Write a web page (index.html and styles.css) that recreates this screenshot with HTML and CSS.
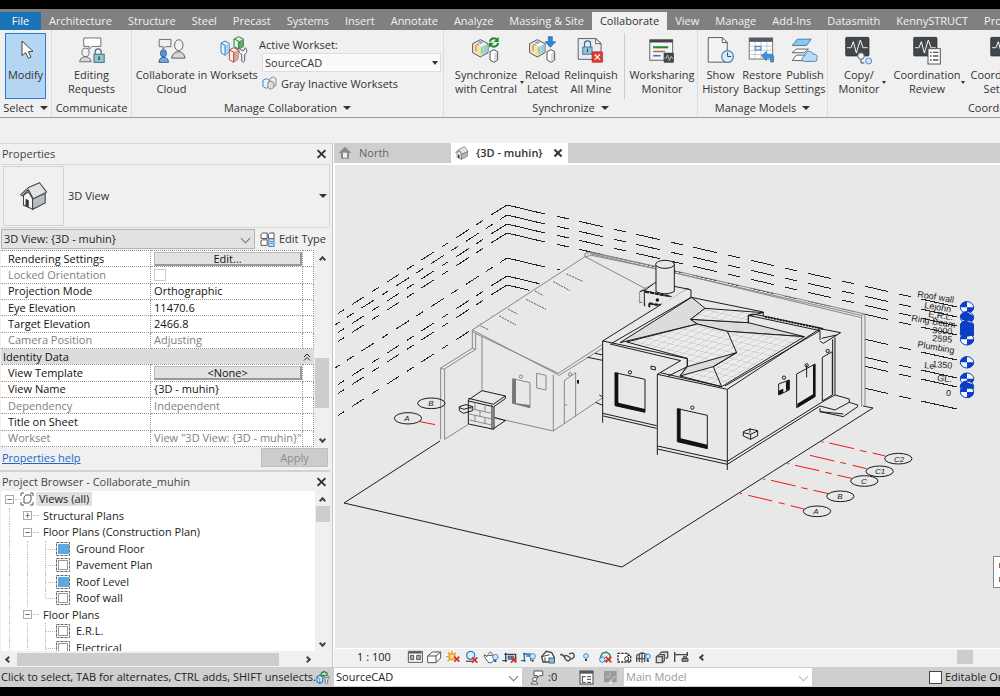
FILE: index.html
```html
<!DOCTYPE html>
<html lang="en">
<head>
<meta charset="utf-8">
<title>Collaborate_muhin</title>
<link rel="stylesheet" href="styles.css">
</head>
<body>
<svg class="defs" aria-hidden="true">
  <defs>
    <symbol id="i-model" viewBox="0 0 84 90">
      <path d="M2 26 25 14 48 26V53L25 66 2 53Z" fill="#f5e9c8" stroke="#555" stroke-width="3"/>
      <path d="M5 28 25 37V62L5 51Z" fill="#f3e3a8"/>
      <path d="M25 37 46 28V52L25 62Z" fill="#bfe3b5"/><path d="M36 32 46 28V52L36 57Z" fill="#9cc9f0"/>
      <path d="M8 26 25 18 42 26 25 34Z" fill="#fff"/><path d="M15 23 25 18 35 23 25 28Z" fill="#7db4e6"/><path d="M12 27 22 31M12 30V48" stroke="#e0603a" stroke-width="3"/><path d="M30 37V55" stroke="#6fbe79" stroke-width="3"/>
      <path d="M54 50 66 44 77 50V75L66 82 54 75Z" fill="#fff" stroke="#555" stroke-width="3"/><path d="M66 57 75 52V74L66 79Z" fill="#d4d8dd"/>
    </symbol>
    <symbol id="i-pulse" viewBox="0 0 84 90">
      <rect x="2" y="7" width="70" height="56" rx="3" fill="#41464b" stroke="#22262a" stroke-width="2"/>
      <path d="M6 38H18L25 20 34 54 46 15 54 38H68" fill="none" stroke="#fff" stroke-width="3"/>
      <path d="M6 38H68M38 10V60" stroke="#8b9096" stroke-width="1"/>
    </symbol>
    <symbol id="i-house" viewBox="0 0 80 84">
      <path d="M10 40V68L36 80V50L24 30Z" fill="#f4f5f7" stroke="#444" stroke-width="3"/>
      <path d="M36 50 72 34V62L36 80Z" fill="#b6bcc6" stroke="#444" stroke-width="3"/>
      <path d="M2 38 24 18 56 4 76 31 38 50 24 24 6 42Z" fill="#dfe3e8" stroke="#444" stroke-width="3" stroke-linejoin="round"/>
      <path d="M16 50 25 54V74L16 70Z" fill="#333"/>
    </symbol>
    <symbol id="i-sheet" viewBox="0 0 14 14">
      <rect x=".5" y=".5" width="13" height="13" fill="none" stroke="#666" stroke-dasharray="3 1"/>
      <rect x="2.500" y="2.500" width="9" height="9" fill="#fff" stroke="#999"/>
    </symbol>
    <symbol id="i-sheet-on" viewBox="0 0 14 14">
      <rect x=".5" y=".5" width="13" height="13" fill="#fff" stroke="#666" stroke-dasharray="3 1"/>
      <rect x="2" y="2" width="11" height="10" fill="#5ca9e2"/>
    </symbol>
    <symbol id="i-worksets" viewBox="0 0 84 90">
      <g stroke-width="3" stroke-linejoin="round">
        <path d="M3 25 15 18 28 25V50L15 61 3 53Z" fill="#e6f2fc" stroke="#2f80c8"/><path d="M15 31 28 25V50L15 61Z" fill="#aed2f2"/><path d="M3 25 15 31V60" fill="none" stroke="#2f80c8"/>
        <path d="M42 12 56 5 70 12V35L56 42 42 35Z" fill="#dff2df" stroke="#2e7d3e"/><path d="M56 19 69 13V34L56 41Z" fill="#5fa96a"/><path d="M44 12 56 19V40" fill="none" stroke="#2e7d3e"/>
        <path d="M28 45 41 38 54 45V72L41 82 28 74Z" fill="#fdecea" stroke="#b1483f"/><path d="M41 51 54 45V72L41 82Z" fill="#d9a49d"/><path d="M28 45 41 51V81" fill="none" stroke="#b1483f"/>
        <path d="M58 38 64 46 72 46 76 38C84 46 80 56 74 58V78Q70 86 65 78V58C56 54 55 44 58 38Z" fill="#eef0f3" stroke="#555f6b"/>
      </g>
    </symbol>
    <symbol id="i-worksets-small" viewBox="0 0 48 48">
      <path d="M3 22 13 16 23 22V38L13 45 3 38Z" fill="#d6eafb" stroke="#2f80c8" stroke-width="4"/><path d="M4 23 13 28V44" fill="none" stroke="#2f80c8" stroke-width="3"/>
      <path d="M18 9 28 3 38 9V17H18Z" fill="#b9e0bd" stroke="#2e7d3e" stroke-width="4"/>
      <path d="M28 20 33 26 38 26 43 20Q48 28 40 32V42Q36 48 32 42V32Q24 28 28 20Z" fill="#eef0f3" stroke="#555f6b" stroke-width="3"/>
    </symbol>
    <pattern id="tiles" width="1" height="1" patternUnits="userSpaceOnUse" patternTransform="matrix(21 5 22 -13 0 0)">
      <rect width="1" height="1" fill="#ececec"/><path d="M0 0H1M0 0V1" stroke="#aaa" stroke-width=".12"/>
    </pattern>
    <g id="level">
      <path d="M507 205 545 214M921 299 957 307"/>
      <path d="M557 216.300 921 299" stroke-dasharray="12 11 24 11.500"/>
    </g>
    <g id="level-a">
      <path d="M507 205 491 215"/><path d="M483 220.500 338 313.500" stroke-dasharray="8 9 15 9.300"/>
    </g>
    <g id="level-b">
      <path d="M507 205 500 209.500"/><path d="M493 214 335 315" stroke-dasharray="8 9 15 9.300"/>
    </g>
    <g id="tag">
      <ellipse rx="20" ry="17" fill="#f4f7ff" stroke="#0a3fb5" stroke-width="3"/>
      <path d="M0-18V0H-21A21 18 0 0 1 0-18ZM0 0H21A21 18 0 0 1 0 18Z" fill="#0a3fc5"/>
    </g>
  </defs>
</svg>

<nav class="tabs" aria-label="Ribbon tabs">
  <button class="tab file">File</button>
  <button class="tab">Architecture</button><button class="tab">Structure</button><button class="tab">Steel</button><button class="tab">Precast</button><button class="tab">Systems</button><button class="tab">Insert</button><button class="tab">Annotate</button><button class="tab">Analyze</button><button class="tab">Massing &amp; Site</button><button class="tab active">Collaborate</button><button class="tab">View</button><button class="tab">Manage</button><button class="tab">Add-Ins</button><button class="tab">Datasmith</button><button class="tab">KennySTRUCT</button><button class="tab">Prov</button>
</nav>

<div class="ribbon">
  <section class="group g-select">
    <div class="tools">
      <button class="tool modify">
        <svg viewBox="0 0 84 90"><path d="M30 18V62L41 53 49 70 57 66 49 50 63 49Z" fill="#fff" stroke="#444" stroke-width="3"/></svg>
        <span>Modify</span></button>
    </div>
    <button class="title">Select <i class="caret"></i></button>
  </section>
  <section class="group g-comm">
    <div class="tools">
      <button class="tool">
        <svg viewBox="228 104 93 90"><path d="M247 109H304V137H275L265 147V137H247Z" fill="#fff" stroke="#666" stroke-width="3"/><ellipse cx="253" cy="157" rx="12" ry="14" fill="#f1f2f4" stroke="#666" stroke-width="3"/><path d="M233 188Q234 175 248 172H258Q270 176 272 188Z" fill="#d8dbe0" stroke="#666" stroke-width="3"/><path d="M285 162V155A10 10 0 0 1 305 155V165" fill="none" stroke="#4a6a74" stroke-width="4"/><rect x="281" y="163" width="34" height="27" fill="#8cc6cf" stroke="#3d6873" stroke-width="3"/><path d="M298 171V182" stroke="#234" stroke-width="4"/></svg>
        <span>Editing<br>Requests</span></button>
    </div>
    <div class="title">Communicate</div>
  </section>
  <section class="group g-manage">
    <div class="tools">
      <button class="tool w74">
        <svg viewBox="465 104 93 90"><path d="M469 114H508V138H490L482 147V138H469Z" fill="#eceef0" stroke="#666" stroke-width="3"/><ellipse cx="534" cy="133" rx="14" ry="18" fill="#f4f5f6" stroke="#555" stroke-width="3"/><path d="M510 176Q512 160 528 155H540Q553 160 555 176Z" fill="#d4d7db" stroke="#555" stroke-width="3"/><ellipse cx="483" cy="160" rx="10" ry="12" fill="#5c93ce" stroke="#2b5c99" stroke-width="3"/><path d="M468 190Q468 177 478 174H490Q500 178 500 190Z" fill="#76a8dc" stroke="#2b5c99" stroke-width="3"/></svg>
        <span>Collaborate in<br>Cloud</span></button>
      <button class="tool w50"><svg><use href="#i-worksets"/></svg><span>Worksets</span></button>
      <div class="workset">
        <label for="active-workset">Active Workset:</label>
        <div class="combo"><select id="active-workset"><option>SourceCAD</option></select></div>
        <button class="inline"><svg viewBox="782 232 46 42"><path d="M785 243 795 238 804 243V261L795 268 785 262Z" fill="#e6f2fc" stroke="#3a86cc" stroke-width="3"/><path d="M806 238 815 233 825 238V260L806 260Z" fill="#eee" stroke="#888" stroke-width="3"/><path d="M800 250 809 246 818 250V265L809 271 800 266Z" fill="#ddd" stroke="#888" stroke-width="3"/></svg>Gray Inactive Worksets</button>
      </div>
    </div>
    <button class="title">Manage Collaboration <i class="caret"></i></button>
  </section>
  <section class="group g-sync">
    <div class="tools">
      <button class="tool w72 drop">
        <svg viewBox="0 0 84 90"><use href="#i-model" width="84" height="90"/><path d="M54 20A12 11 0 0 1 75 14M78 24A12 11 0 0 1 57 31" fill="none" stroke="#1f8a2a" stroke-width="6"/><path d="M80 5V21H65ZM51 38V23H66Z" fill="#1f8a2a"/></svg>
        <span>Synchronize<br>with Central</span><i class="caret small"></i></button>
      <button class="tool w40">
        <svg viewBox="0 0 84 90"><use href="#i-model" width="84" height="90"/><path d="M58 5H70V20H80L64 37 48 20H58Z" fill="#2e86de" stroke="#1c5fa8" stroke-width="2"/></svg>
        <span>Reload<br>Latest</span></button>
      <button class="tool w56">
        <svg viewBox="738 104 93 90"><path d="M742 111H800L818 128V180H742Z" fill="#e9edf3" stroke="#555" stroke-width="3"/><path d="M800 111V128H818Z" fill="#fff" stroke="#555" stroke-width="3"/><path d="M763 138V128A10 9 0 0 1 783 128V140" fill="none" stroke="#3f6d8c" stroke-width="4"/><rect x="757" y="139" width="31" height="24" fill="#93c4d8" stroke="#3f6d8c" stroke-width="3"/><path d="M773 145V156" stroke="#234" stroke-width="3"/><rect x="788" y="155" width="35" height="35" rx="3" fill="#df3a34" stroke="#a9201c" stroke-width="2"/><path d="M797 164 814 181M814 164 797 181" stroke="#fff" stroke-width="4"/></svg>
        <span>Relinquish<br>All Mine</span></button>
      <div class="rule"></div>
      <button class="tool w66">
        <svg viewBox="0 0 93 90"><rect x="6" y="11" width="76" height="68" fill="#f4f5f6" stroke="#555" stroke-width="3"/><rect x="6" y="11" width="76" height="9" fill="#444"/><path d="M17 36H67" stroke="#1f8a2a" stroke-width="7"/><path d="M17 50H57" stroke="#d1622f" stroke-width="5"/><path d="M17 64H42" stroke="#2e78c8" stroke-width="5"/><rect x="52" y="54" width="34" height="33" rx="3" fill="#41464b"/><path d="M55 72H61L65 62 71 80 77 66 80 72H84" fill="none" stroke="#fff" stroke-width="2"/></svg>
        <span>Worksharing<br>Monitor</span></button>
    </div>
    <button class="title">Synchronize <i class="caret"></i></button>
  </section>
  <section class="group g-models">
    <div class="tools">
      <button class="tool w40">
        <svg viewBox="135 104 90 90"><path d="M139 109H184L200 125V188H139Z" fill="#f2f3f5" stroke="#555" stroke-width="3"/><path d="M184 109V125H200Z" fill="#fff" stroke="#555" stroke-width="3"/><circle cx="201" cy="170" r="19" fill="#d8ecfa" stroke="#4c83b5" stroke-width="4"/><path d="M201 157V170H213" fill="none" stroke="#345" stroke-width="3"/></svg>
        <span>Show<br>History</span></button>
      <button class="tool w42">
        <svg viewBox="258 104 93 90"><rect x="262" y="109" width="78" height="70" fill="#fff" stroke="#666" stroke-width="3"/><rect x="262" y="109" width="78" height="13" fill="#555b62"/><path d="M262 136H340M262 150H340M262 164H340M281 122V179M301 122V179M321 122V179" stroke="#aab" stroke-width="2"/><rect x="282" y="137" width="19" height="12" fill="#d6e9fa" stroke="#2e78c8" stroke-width="3"/><path d="M302 168 319 154V163H335Q343 163 343 172V189H333V175H319V184Z" fill="#3f92e0" stroke="#1c64ae" stroke-width="2"/></svg>
        <span>Restore<br>Backup</span></button>
      <button class="tool w44">
        <svg viewBox="384 104 93 90"><path d="M388 184 402 166H440L426 184ZM388 158 402 146H442L428 158Z" fill="#fff" stroke="#555" stroke-width="3"/><path d="M388 134 405 113H451L436 134Z" fill="#8fc7ec" stroke="#3878ac" stroke-width="3"/><path d="M431 187C419 188 416 172 429 169 431 151 452 148 457 163 468 161 474 170 470 177 472 184 468 187 462 187Z" fill="#b9dcf5" stroke="#3f82bd" stroke-width="3"/></svg>
        <span>Publish<br>Settings</span></button>
    </div>
    <button class="title">Manage Models <i class="caret"></i></button>
  </section>
  <section class="group g-coord">
    <div class="tools">
      <button class="tool w50 drop">
        <svg viewBox="0 0 84 90"><use href="#i-pulse" width="84" height="90"/><circle cx="48" cy="63" r="10" fill="#f1f1f1" stroke="#666" stroke-width="3"/><path d="M48 73V84H58" fill="none" stroke="#444" stroke-width="3"/><circle cx="71" cy="78" r="9" fill="#cfe7fa" stroke="#4b93cf" stroke-width="3"/></svg>
        <span>Copy/<br>Monitor</span><i class="caret small"></i></button>
      <button class="tool w72 drop">
        <svg viewBox="0 0 84 90"><use href="#i-pulse" width="84" height="90"/><rect x="45" y="41" width="37" height="46" fill="#fff" stroke="#555" stroke-width="3"/><path d="M51 52H56M51 63H56M51 75H56M60 52H76M60 63H76M60 75H76" stroke="#555" stroke-width="4"/></svg>
        <span>Coordination<br>Review</span><i class="caret small"></i></button>
      <button class="tool w66"><svg><use href="#i-pulse"/></svg><span>Coordination<br>Settings</span></button>
    </div>
    <div class="title">Coordinate</div>
  </section>
</div>
<div class="options"></div>

<main class="work">
  <aside class="side">
    <header class="bar"><span>Properties</span><button class="close" aria-label="Close properties"></button></header>
    <div class="type">
      <div class="thumb"><svg><use href="#i-house"/></svg></div>
      <span>3D View</span><i class="caret"></i>
    </div>
    <div class="filter">
      <div class="combo chevron"><select aria-label="Selection filter"><option>3D View: {3D - muhin}</option></select></div>
      <button class="inline"><svg viewBox="0 0 46 46"><path d="M3 7 8 3H22V20H3ZM26 7 30 3H43V20H26ZM3 27 8 24H22V41H3Z" fill="#fff" stroke="#555" stroke-width="3"/><rect x="27" y="21" width="16" height="23" fill="#dcecf8" stroke="#2e78c8" stroke-width="3"/><path d="M31 29H40M31 35H40" stroke="#2e78c8" stroke-width="3"/></svg>Edit Type</button>
    </div>
    <div class="scroller props">
      <table>
        <tbody>
        <tr><th>Rendering Settings</th><td><button class="cell">Edit...</button></td><td></td></tr>
        <tr class="dim"><th><label for="locked">Locked Orientation</label></th><td><input type="checkbox" id="locked" disabled></td><td></td></tr>
        <tr><th>Projection Mode</th><td>Orthographic</td><td></td></tr>
        <tr><th>Eye Elevation</th><td>11470.6</td><td></td></tr>
        <tr><th>Target Elevation</th><td>2466.8</td><td></td></tr>
        <tr class="dim"><th>Camera Position</th><td>Adjusting</td><td></td></tr>
        <tr class="head"><th colspan="2">Identity Data</th><td><svg viewBox="0 0 8 8"><path d="M1 4 4 1 7 4M1 7.500 4 4.500 7 7.500"/></svg></td></tr>
        <tr><th>View Template</th><td><button class="cell">&lt;None&gt;</button></td><td></td></tr>
        <tr><th>View Name</th><td>{3D - muhin}</td><td></td></tr>
        <tr class="dim"><th>Dependency</th><td>Independent</td><td></td></tr>
        <tr><th>Title on Sheet</th><td></td><td></td></tr>
        <tr class="dim"><th>Workset</th><td>View "3D View: {3D - muhin}"</td><td></td></tr>
        </tbody>
      </table>
      <div class="vscroll"><i class="arrow up"></i><b></b><i class="arrow down"></i></div>
    </div>
    <div class="help"><a href="#help">Properties help</a><button class="apply" disabled>Apply</button></div>

    <header class="bar browser"><span>Project Browser - Collaborate_muhin</span><button class="close" aria-label="Close project browser"></button></header>
    <div class="scroller tree-box">
      <ul class="tree">
        <li><i class="g box root">−</i><svg class="views" viewBox="0 0 14 14"><path d="M1 4V1H4M10 1H13V4M13 10V13H10M4 13H1V10" fill="none" stroke="#555"/><path d="M4 5 6 3H11V8L9 11H4Z" fill="#fff" stroke="#555"/></svg><span class="hot">Views (all)</span></li>
        <li><i class="g v"></i><i class="g box">+</i><span class="branch">Structural Plans</span></li>
        <li><i class="g v"></i><i class="g box">−</i><span class="branch">Floor Plans (Construction Plan)</span></li>
        <li><i class="g v"></i><i class="g v"></i><i class="g v h"></i><svg><use href="#i-sheet-on"/></svg><span>Ground Floor</span></li>
        <li><i class="g v"></i><i class="g v"></i><i class="g v h"></i><svg><use href="#i-sheet"/></svg><span>Pavement Plan</span></li>
        <li><i class="g v"></i><i class="g v"></i><i class="g v h"></i><svg><use href="#i-sheet-on"/></svg><span>Roof Level</span></li>
        <li><i class="g v"></i><i class="g v"></i><i class="g v h end"></i><svg><use href="#i-sheet"/></svg><span>Roof wall</span></li>
        <li><i class="g v"></i><i class="g box">−</i><span class="branch">Floor Plans</span></li>
        <li><i class="g v"></i><i class="g v"></i><i class="g v h"></i><svg><use href="#i-sheet"/></svg><span>E.R.L.</span></li>
        <li><i class="g v"></i><i class="g v"></i><i class="g v h"></i><svg><use href="#i-sheet"/></svg><span>Electrical</span></li>
      </ul>
      <div class="vscroll top"><i class="arrow up"></i><b></b><i class="arrow down"></i></div>
    </div>
    <div class="hscroll"><i class="arrow left"></i><b></b><i class="arrow right"></i></div>
  </aside>

  <section class="view">
    <div class="docs">
      <button class="doc"><svg viewBox="0 0 42 42"><path d="M21 2 40 21H33V38H9V21H2Z" fill="#8a8a8a"/><rect x="15" y="20" width="12" height="15" fill="#eee"/></svg>North</button>
      <div class="doc on"><svg><use href="#i-house"/></svg><span>{3D - muhin}</span><button class="close" aria-label="Close view"></button></div>
    </div>
    <div class="canvas">
      <svg class="scene" viewBox="335 165 665 484" preserveAspectRatio="xMinYMin slice" role="img" aria-label="Axonometric view of the house">
        <g class="lv">
          <use href="#level"/><use href="#level" y="10"/><use href="#level" y="19"/><use href="#level" y="28"/><use href="#level" y="53"/><use href="#level" y="71"/><use href="#level" y="80"/><use href="#level" y="102"/>
          <use href="#level-a"/><use href="#level-b" y="10"/><use href="#level-a" y="19"/><use href="#level-a" y="28"/><use href="#level-b" y="53"/><use href="#level-a" y="71"/><use href="#level-a" y="80"/><use href="#level-a" y="102"/>
        </g>
        <path class="bg" d="M441 369 472 348 472 329 585 253 864 314V407L730 470 553 431 444 439Z"/>
        <path class="ln" d="M440 441 344 503 622 567 873 408 863 406"/>

        <!-- rear wing -->
        <g class="ln grey" transform="translate(330 140) scale(.3333)">
          <path d="M427 570 765 350 765 340 780 338 980 380M765 350 785 346 980 387M765 350 945 445 975 430M427 570 688 706 822 622M430 577 685 700 820 612M427 570V625M437 580V628M456 590V752M332 684 427 625 437 628 342 688ZM332 684V898M344 688V898L415 853M670 705V873L820 772M670 873 492 833"/>
          <path d="M548 716 600 728V803L548 790ZM620 700 648 706V750L620 744ZM703 850V722L737 698V830M703 795H712M929 490V455L945 445V500"/>
        </g>
        <g class="ln hatch" transform="translate(330 140) scale(.3333)">
          <path d="M710 402 760 425M670 425 720 452M588 478 648 508M508 528 558 555M535 508 562 522M615 453 640 467M452 558 477 570"/>
        </g>
        <g transform="translate(330 140) scale(.3333)">
          <path d="M548 716 558 718V790L600 795V804L546 790Z" fill="#777"/>
          <path class="bg ln" d="M415 780 456 752 526 768V776L492 800V868L415 852Z"/>
          <path class="ln" d="M415 775 490 793 526 768M415 783 490 800M486 797V868M388 800 408 794 428 800V812L400 820 388 812ZM388 803 402 808 428 800M495 833 526 842 492 865"/>
          <path class="ln grey" d="M418 805 485 820M418 822 485 837M418 840 485 855M435 790V808M465 797V815M450 812V830M435 826V845M465 832V850"/>
          <ellipse class="ln" cx="304" cy="790" rx="41" ry="16"/><ellipse class="ln" cx="234" cy="835" rx="41" ry="17"/>
          <path class="red" d="M270 845 315 854"/><circle cx="573" cy="710" r="5" class="ln grey"/><circle cx="720" cy="703" r="5" class="ln grey"/>
          <path class="ln thick" d="M744 720V731"/><path class="ln" d="M773 652 822 662M795 640 832 648 832 658M797 787 820 797M808 765 820 772"/>
        </g>

        <!-- back wall and main block -->
        <g class="ln grey" transform="translate(590 240) scale(.3333)">
          <path d="M0 35 825 222V500M0 41 815 226V500M815 226 825 222M252 98 815 233"/>
        </g>
        <g class="ln" transform="translate(590 240) scale(.3333)">
          <path class="bg plain" d="M38 303 290 148 303 150V170L520 218 700 266 752 278 735 292V465L412 672 202 625V565L38 530Z"/>
          <path class="shade" d="M90 308 305 172 345 205 302 238 322 252Z"/>
          <path class="shade" d="M302 238 475 248 643 290 412 274 322 252Z"/>
          <path class="tile" d="M345 205 520 218 475 228V248L302 238Z"/>
          <path class="tile" d="M110 306 322 252 412 274 643 290 395 440 270 408 292 378V355Z"/>
          <path class="shade" d="M440 338 292 380 270 408 370 380Z"/>
          <path d="M440 338 412 274M440 338 370 380 395 440"/>
          <path d="M38 303V548M38 303 275 155 290 146 303 150V172M65 310 303 172M38 303 292 356V380L235 408M60 312 272 362 202 403M202 403V645M202 403 412 448 690 266M210 398 395 440 M405 438 690 272M412 448V690"/>
          <path d="M303 172 520 216V230M475 250V226L690 272V300M475 226 490 222 700 266M690 266 752 278 700 310 690 303M695 295 740 285M735 292V465M728 298V465"/>
          <path class="thick dark" d="M525 230 700 267" stroke-dasharray="2 1"/>
          <path d="M38 520 200 557M40 528 200 565M202 618 412 664 690 490M202 627 412 673 690 498M690 490 735 465 778 477V487L735 510 690 498M690 505V515L760 530 803 500V495L778 487M690 515 760 522"/>
          <!-- windows and doors -->
          <path d="M75 398 165 418V517L75 497ZM262 506 352 526V626L262 605ZM620 402 675 372V470L620 503ZM697 352 727 335V465L697 483ZM566 432 598 420V450L566 465Z"/>
          <path class="fill" d="M75 398H85V488L165 507V517L75 497ZM262 506H272V595L352 614V626L262 605ZM669 376 676 372V470L622 503V491L669 463ZM566 452 580 446V458L566 465ZM588 425 598 420V448L588 453Z"/>
          <path d="M183 378 196 381V390L183 387ZM460 575 480 567 503 572V587L482 598 460 588ZM460 578 482 583 503 573M482 583V598M480 565V578M650 375V412"/>
          <circle cx="120" cy="397" r="5"/><circle cx="307" cy="503" r="5"/><circle cx="582" cy="413" r="5"/><circle cx="650" cy="376" r="5"/><circle cx="713" cy="333" r="5"/>
          <!-- water tank -->
          <path class="bg plain" d="M163 150 195 128 290 146 215 195 163 190Z"/>
          <path d="M163 152 195 128 298 148M163 152 245 170M150 155 163 150M163 150V198M178 190 200 196 215 192"/>
          <path class="thick dark" d="M165 155 240 169M178 190V205M178 190 208 195" stroke-dasharray="4 1"/>
          <path class="bg" d="M198 72V155Q225 168 253 155V72"/><ellipse class="bg" cx="225" cy="73" rx="28" ry="12"/>
          <circle cx="202" cy="180" r="5" class="fill"/><path d="M150 187H157" stroke="#1f9a2f"/>
        </g>

        <!-- grid lines -->
        <g transform="translate(700 420) scale(.3333)">
          <path class="red" d="M388 69 462 86M480 91 500 96M518 99 556 108M330 106 403 123M421 127 438 131M458 136 500 146M285 136 358 152M376 157 395 161M413 166 455 175M213 181 287 198M304 203 323 207M341 211 385 221M145 226 217 243M236 248 254 252M272 257 312 267M365 66H371M262 131H268M190 178H196M120 221H126"/>
          <g class="ln"><ellipse cx="595" cy="116" rx="41" ry="16"/><ellipse cx="539" cy="154" rx="41" ry="16"/><ellipse cx="493" cy="183" rx="41" ry="16"/><ellipse cx="421" cy="229" rx="41" ry="16"/><ellipse cx="351" cy="274" rx="41" ry="16"/></g>
        </g>
        <g class="names">
          <text x="899" y="462">C2</text><text x="880" y="474">C1</text><text x="864" y="484">C</text><text x="840" y="499">B</text><text x="816" y="514">A</text><text x="431" y="406">B</text><text x="407" y="421">A</text>
        </g>
        <g transform="translate(860 270) scale(.3333)">
          <use href="#tag" x="321" y="112"/><use href="#tag" x="321" y="142"/><use href="#tag" x="321" y="168"/><use href="#tag" x="321" y="190"/><use href="#tag" x="321" y="208"/><use href="#tag" x="321" y="277"/><use href="#tag" x="321" y="326"/><use href="#tag" x="321" y="350"/><use href="#tag" x="321" y="366"/>
          <path d="M300 138 321 126 341 138 335 150H306ZM300 165 321 153 342 162V196L321 200 300 194ZM302 348 321 336 341 344 336 356H306Z" fill="#0a3fc5"/>
        </g>
        <g class="levels">
          <text transform="translate(917 297) rotate(9)">Roof wall</text>
          <text transform="translate(924 308) rotate(9)">Lejohn</text>
          <text transform="translate(928 317) rotate(7)">E.R.L.</text>
          <text transform="translate(911 321) rotate(9)">Ring Beam</text>
          <text transform="translate(932 333) rotate(5)">3000</text>
          <text transform="translate(932 341) rotate(5)">2595</text>
          <text transform="translate(917 347) rotate(10)">Plumbing</text>
          <text transform="translate(924 368) rotate(7)">Le</text>
          <text transform="translate(932 367) rotate(5)">1350</text>
          <text transform="translate(937 381) rotate(5)">GL.</text>
          <text transform="translate(946 396)">0</text>
        </g>
      </svg>
      <div class="tip"></div>
    </div>
    <div class="viewbar">
      <button class="scale">1 : 100</button>
      <button class="vb" aria-label="Detail level"><svg viewBox="227 28 54 45"><path d="M234 32H276V65H234Z" fill="#fff" stroke="#555" stroke-width="3"/><path d="M236 36H274" stroke="#555" stroke-width="5"/><path d="M240 44H250V57H240ZM259 44H270V57H259Z" stroke="#555" stroke-width="3" fill="#aaa"/></svg></button>
      <button class="vb" aria-label="Visual style"><svg viewBox="286 28 54 45"><path d="M294 46 308 34H333V52L319 66H294ZM294 46H319L333 34M319 46V66" fill="#fff" stroke="#555" stroke-width="3"/></svg></button>
      <button class="vb" aria-label="Sun path off"><svg viewBox="339 28 54 45"><circle cx="363" cy="48" r="9" fill="#fbd77c" stroke="#e09a20" stroke-width="4"/><path d="M363 30V36M346 48H352M351 35 356 40M375 36 371 40M350 62 356 56" stroke="#e09a20" stroke-width="4"/><path d="M370 48 385 63M385 48 370 63" stroke="#d2322b" stroke-width="5"/></svg></button>
      <button class="vb" aria-label="Shadows off"><svg viewBox="403 28 54 45"><circle cx="426" cy="44" r="12" fill="#dcebf8" stroke="#3a7fbd" stroke-width="4"/><path d="M412 62H432" stroke="#555" stroke-width="4"/><path d="M430 50 446 66M446 50 430 66" stroke="#d2322b" stroke-width="5"/></svg></button>
      <button class="vb" aria-label="Rendering dialog"><svg viewBox="455 28 54 45"><path d="M470 44H490V60L483 66H475L462 48V42L470 48ZM474 40 480 34 487 40" fill="#fff" stroke="#555" stroke-width="3"/><circle cx="495" cy="49" r="8" fill="#d4eafa" stroke="#3a8fd6" stroke-width="3"/><path d="M492 61H498" stroke="#345" stroke-width="6"/></svg></button>
      <button class="vb" aria-label="Crop view"><svg viewBox="514 28 54 45"><path d="M518 60H532M528 36V64M524 41H558V62" fill="none" stroke="#345" stroke-width="4"/><path d="M535 46H552V56H535Z" fill="#4c93d4" stroke="#246" stroke-width="2"/><path d="M544 50 560 66M560 50 544 66" stroke="#d2322b" stroke-width="5"/></svg></button>
      <button class="vb" aria-label="Show crop region"><svg viewBox="573 28 54 45"><path d="M576 60H590M586 36V64M582 40H605M592 46H605V60" fill="none" stroke="#2f6da8" stroke-width="4"/><circle cx="611" cy="47" r="8" fill="#d4eafa" stroke="#3a8fd6" stroke-width="3"/><path d="M608 60H614" stroke="#345" stroke-width="6"/></svg></button>
      <button class="vb" aria-label="Lock 3D view"><svg viewBox="628 28 54 45"><path d="M636 48 650 32 666 36 674 50V64H640Z" fill="#fff" stroke="#444" stroke-width="4"/><path d="M646 50V64M636 48 660 42" stroke="#444" stroke-width="3"/><rect x="658" y="52" width="16" height="15" fill="#8cc6cf" stroke="#3d6873" stroke-width="3"/></svg></button>
      <button class="vb" aria-label="Temporary hide"><svg viewBox="685 28 54 45"><path d="M692 44Q696 38 702 46L708 56Q714 64 720 58T714 46 706 54M718 40Q730 34 733 42T724 56" fill="none" stroke="#444" stroke-width="4"/></svg></button>
      <button class="vb" aria-label="Reveal hidden"><svg viewBox="743 28 54 45"><circle cx="770" cy="46" r="7" fill="#d4eafa" stroke="#3a8fd6" stroke-width="3"/><path d="M767 58H773" stroke="#345" stroke-width="6"/></svg></button>
      <button class="vb" aria-label="Worksharing display off"><svg viewBox="801 28 54 45"><path d="M814 50 820 38 832 34 843 42V56L826 62Z" fill="#dff2df" stroke="#2e8b57" stroke-width="4"/><circle cx="820" cy="57" r="8" fill="#dcebf8" stroke="#2f80c8" stroke-width="3"/><path d="M830 48 847 65M847 48 830 65" stroke="#d2322b" stroke-width="5"/></svg></button>
      <button class="vb" aria-label="Temporary view properties"><svg viewBox="859 28 54 45"><path d="M868 38H898V64H868ZM898 44H906V64H890" fill="#fff" stroke="#333" stroke-width="4" stroke-dasharray="7 3"/><circle cx="894" cy="54" r="6" fill="#fff" stroke="#333" stroke-width="3"/></svg></button>
      <button class="vb" aria-label="Analytical model"><svg viewBox="916 28 54 45"><path d="M924 44 940 36 956 42V62M924 44V64M940 38V66M932 42V64M948 42V64M924 54H950" fill="none" stroke="#555" stroke-width="4"/><circle cx="958" cy="47" r="7" fill="#d4eafa" stroke="#3a8fd6" stroke-width="3"/><path d="M955 60H961" stroke="#345" stroke-width="6"/></svg></button>
      <button class="vb" aria-label="Highlight displacement sets"><svg viewBox="974 28 54 45"><path d="M984 48 992 42H1008V60L1002 66H984ZM984 48H1002V66M994 38 1002 34H1018V50L1012 54" fill="#ddd" stroke="#555" stroke-width="4"/></svg></button>
      <button class="vb" aria-label="Reveal constraints"><svg viewBox="1032 28 54 45"><path d="M1040 34V64M1040 42H1078M1078 34V46" stroke="#444" stroke-width="4"/><path d="M1062 62V54H1080V62ZM1066 54V48H1076V54" fill="#999" stroke="#444" stroke-width="3"/></svg></button>
      <i class="arrow left"></i>
      <div class="hthumb"></div>
    </div>
  </section>
</main>

<footer class="status">
  <span class="hint">Click to select, TAB for alternates, CTRL adds, SHIFT unselects.</span>
  <svg class="ws"><use href="#i-worksets-small"/></svg>
  <div class="combo chevron white"><select aria-label="Workset"><option>SourceCAD</option></select></div>
  <svg class="req" viewBox="0 0 42 45"><path d="M12 3H38V17H28L22 24V17H12ZM8 28Q8 22 14 22T20 28 14 34 8 28ZM3 42Q6 34 14 34T24 42Z" fill="#fff" stroke="#555" stroke-width="3"/></svg>
  <span class="count">:0</span>
  <svg class="opt" viewBox="0 0 45 45"><rect x="3" y="3" width="39" height="39" fill="#fff" stroke="#444" stroke-width="3"/><rect x="3" y="3" width="39" height="8" fill="#555"/><path d="M10 18V38M10 20H20M10 37H20M24 20H36M24 28H36M24 37H36" stroke="#444" stroke-width="3"/></svg>
  <svg class="opt" viewBox="0 0 45 45"><rect x="3" y="3" width="38" height="34" fill="#9b9b9b"/><path d="M8 20H20V8M20 34 38 18" stroke="#bbb" stroke-width="4" fill="none"/><path d="M16 40 26 30V42Z" fill="#eee"/></svg>
  <div class="combo chevron white dim"><select aria-label="Design option"><option>Main Model</option></select></div>
  <label class="edit"><input type="checkbox"> Editable Only</label>
</footer>
</body>
</html>
```
FILE: styles.css
```css
* { box-sizing: border-box; }

body {
  margin: 0;
  height: 100vh;
  padding: 9px 0;
  display: flex;
  flex-direction: column;
  overflow: hidden;
  background: #000;
  color: #333;
  font: 11px/14px "Open Sans", "Noto Sans", sans-serif;
}

button, select, input { font: inherit; color: inherit; margin: 0; }
button { background: none; border: 0; padding: 0; white-space: nowrap; }
svg { flex: none; overflow: visible; }
.defs { position: absolute; width: 0; height: 0; }

/* ribbon tabs */
.tabs { flex: none; display: flex; height: 21px; padding-top: 3px; background: #808080; overflow: hidden; }
.tab { flex: none; padding: 0 8px; color: #f2f2f2; }
.tab.file { width: 41px; background: #1c74b8; color: #fff; }
.tab.active { background: #f0f0f0; color: #333; }

/* ribbon */
.ribbon { flex: none; display: flex; height: 88px; background: #f0f0f0; border-bottom: 1px solid #999; overflow: hidden; }
.group { flex: none; display: flex; flex-direction: column; padding-top: 3px; border-right: 1px solid #ddd; }
.tools { display: flex; justify-content: center; height: 66px; }
.title { display: flex; align-items: center; justify-content: center; gap: 6px; height: 18px; }
.g-select { width: 52px; }
.g-comm { width: 80px; }
.g-manage { width: 312px; }
.g-sync { width: 254px; }
.g-models { width: 130px; }
.g-coord { width: 338px; }
.g-manage .tools, .g-models .tools { justify-content: flex-start; padding-left: 2px; }
.g-sync .tools { justify-content: flex-start; padding-left: 6px; }
.g-coord .tools { justify-content: flex-start; padding-left: 6px; gap: 7px; }

.tool { position: relative; display: flex; flex-direction: column; align-items: center; gap: 3px; padding-top: 2px; }
.tool svg { width: 28px; height: 30px; }
.tool.modify { width: 41px; height: 66px; background: #b5d6f2; border: 1px solid #2c7fd0; padding-top: 1px; }
.w40 { width: 41px; }
.w42 { width: 42px; }
.w44 { width: 44px; }
.w50 { width: 50px; }
.w56 { width: 56px; }
.w66 { width: 68px; }
.w72 { width: 72px; }
.w74 { width: 75px; }
.rule { width: 1px; margin: 0 3px 0 5px; background: #ccc; }

.caret { width: 0; height: 0; border: 4px solid transparent; border-top: 4px solid #333; border-bottom: 0; }
.caret.small { position: absolute; right: -2px; bottom: 15px; border-width: 2px; border-top-width: 3px; }

.workset { display: flex; flex-direction: column; flex: 1; padding: 5px 2px 0 0; gap: 1px; }
.workset .combo { margin-left: 3px; height: 19px; }
.workset .inline { margin: 3px 0 0 3px; }
.inline { display: flex; align-items: center; gap: 4px; }
.inline svg { width: 15px; height: 15px; }

.combo { position: relative; display: flex; background: #fafafa; border: 1px solid #ddd; }
.combo select { flex: 1; min-width: 0; appearance: none; border: 0; background: none; padding: 0 18px 0 2px; }
.combo::after { content: ""; position: absolute; right: 2px; top: 7px; border: 3px solid transparent; border-top: 4px solid #333; border-bottom: 0; pointer-events: none; }
.combo.chevron::after { right: 5px; top: 5px; width: 6px; height: 6px; border: solid #777; border-width: 0 1px 1px 0; transform: rotate(45deg); }

.options { flex: none; height: 25px; background: #f0f0f0; }

/* workspace */
.work { flex: 1; min-height: 0; display: flex; background: #f0f0f0; }
.side { flex: none; width: 333px; padding-right: 2px; display: flex; flex-direction: column; border-right: 1px solid #c4c4c4; border-top: 1px solid #d5d5d5; }
.bar { flex: none; display: flex; align-items: center; justify-content: space-between; height: 20px; padding: 0 3px 0 2px; color: #444; }
.close { position: relative; width: 11px; height: 12px; }
.close::before, .close::after { content: ""; position: absolute; left: 0; top: 5px; width: 11px; height: 2px; background: #333; transform: rotate(45deg); }
.close::after { transform: rotate(-45deg); }

.type { flex: none; display: flex; align-items: center; gap: 4px; height: 64px; margin-left: 1px; padding: 1px 2px; border: 1px solid #d8d8d8; border-width: 1px 1px 1px 0; }
.type .caret { margin-left: auto; }
.thumb { display: grid; place-items: center; width: 61px; height: 60px; border: 1px solid #d4d4d4; }
.thumb svg { width: 28px; height: 30px; }
.filter { flex: none; display: flex; align-items: center; gap: 5px; height: 22px; padding-left: 1px; }
.filter .combo { width: 254px; height: 20px; background: #e2e2e2; border-color: #b4b4b4; color: #222; }

.scroller { display: flex; overflow: hidden; background: #fff; color: #111; }
.props { flex: none; height: 197px; margin-left: 1px; }
.props table { flex: 1; height: 197px; table-layout: fixed; border-collapse: collapse; }
.props th, .props td { height: 16px; padding: 0 0 0 3px; border: 1px dotted #999; border-left: 0; font-weight: 400; text-align: left; line-height: 14px; white-space: nowrap; overflow: hidden; }
.props th { width: 151px; padding-left: 7px; }
.props td:last-child { width: 11px; }
.props .dim { color: #808080; }
.props .head th, .props .head td { background: #dcdcdc; padding-left: 2px; border: 0; }
.props .head td { padding: 0; }
.props .head svg { display: block; width: 8px; height: 8px; fill: none; stroke: #222; }
.props input { display: block; width: 12px; height: 12px; appearance: none; border: 1px solid #ccc; background: #fff; }
.props .cell { display: block; width: 148px; height: 14px; line-height: 12px; border: 1px solid #bbb; border-right: 2px solid #999; border-bottom: 2px solid #999; background: #e2e2e2; }

.vscroll { flex: none; display: flex; flex-direction: column; align-items: center; width: 16px; padding: 7px 0 5px; background: #f0f0f0; }
.vscroll b { width: 14px; height: 50px; margin: 96px 0 auto; background: #cdcdcd; }
.vscroll.top b { height: 16px; margin-top: 3px; }
.arrow { width: 5px; height: 5px; border: solid #444; border-width: 2px 0 0 2px; transform: rotate(45deg); }
.arrow.down { transform: rotate(225deg); }
.arrow.left { transform: rotate(-45deg); }
.arrow.right { transform: rotate(135deg); }

.help { flex: none; display: flex; align-items: center; justify-content: space-between; height: 21px; padding: 0 2px; }
.help a { color: #1a68c8; }
.apply { width: 67px; height: 19px; background: #ccc; border: 1px solid #bfbfbf; color: #8c8c8c; }
.bar.browser { height: 21px; margin-top: 2px; border-top: 2px solid #d2d2d2; }

.tree-box { flex: 1; min-height: 0; margin-left: 1px; }
.tree-box .vscroll { width: 15px; }
.tree { flex: 1; display: grid; grid-auto-rows: 1fr; height: 165px; margin: 0; padding: 0; list-style: none; }
.tree li { display: flex; align-items: center; white-space: nowrap; color: #222; }
.tree svg { width: 14px; height: 14px; margin: 0 6px 0 1px; }
.tree .views { margin: 0 2px 0 1px; }
.tree .hot { background: #e0e0e0; padding: 0 3px; }
.tree .branch { margin-left: 6px; }
.g { position: relative; width: 18px; align-self: stretch; font-style: normal; }
.g.v::before { content: ""; position: absolute; left: 8px; top: 0; bottom: 0; border-left: 1px dotted #bbb; }
.g.h::after { content: ""; position: absolute; left: 9px; right: 0; top: 8px; border-top: 1px dotted #bbb; }
.g.end::before { bottom: 50%; }
.g.box { align-self: center; width: 9px; height: 9px; margin: 0 5px 0 4px; border: 1px solid #aaa; background: #fff; color: #345; font-size: 10px; line-height: 7px; text-align: center; }
.g.box::after { content: ""; position: absolute; left: 9px; width: 6px; top: 3px; border-top: 1px dotted #bbb; }

.hscroll { flex: none; display: flex; align-items: center; height: 16px; padding: 0 20px 0 6px; }
.hscroll b { flex: 0 1 262px; height: 13px; margin: 0 auto 0 6px; background: #cdcdcd; }

/* drawing area */
.view { flex: 1; min-width: 0; display: flex; flex-direction: column; border-left: 1px solid #fff; }
.docs { flex: none; display: flex; height: 20px; background: #cecece; }
.doc { display: flex; align-items: center; gap: 7px; width: 117px; padding-left: 4px; color: #666; }
.doc svg { width: 14px; height: 14px; }
.doc.on { background: #fff; color: #333; font-weight: 600; }
.doc.on .close { margin-left: 3px; width: 10px; }
.doc.on .close::before, .doc.on .close::after { width: 10px; }
.canvas { position: relative; flex: 1; min-height: 0; background: #e8e8e8; border: solid #fff; border-width: 2px 0 1px 1px; overflow: hidden; }
.scene { display: block; width: 100%; height: 100%; }
.scene path, .scene ellipse, .scene circle { vector-effect: non-scaling-stroke; }
.lv { fill: none; stroke: #222; shape-rendering: crispEdges; }
.ln { fill: none; stroke: #1c1c1c; }
.ln.grey { stroke: #888; }
.thick { stroke-width: 2px; }
.hatch { stroke: #555; stroke-dasharray: 2 1; }
.bg { fill: #e8e8e8; }
.plain { stroke: none; }
.shade { fill: #dcdcdc; }
.tile { fill: url(#tiles); }
.fill { fill: #111; stroke: none; }
.red { fill: none; stroke: #f01818; }
.names { font: italic 8px "Liberation Sans", sans-serif; text-anchor: middle; fill: #222; }
.levels { font: 9px "Liberation Sans", sans-serif; fill: #222; }
.tip { position: absolute; right: 0; bottom: 60px; width: 7px; height: 32px; background: #fff; border: 1px solid #888; border-right: 0; }
.tip::before, .tip::after { content: ""; position: absolute; right: 0; width: 1px; height: 5px; background: #a06a4a; }
.tip::before { top: 6px; }
.tip::after { bottom: 5px; }

.viewbar { flex: none; display: flex; align-items: center; gap: 1px; height: 18px; padding: 0 27px 2px 23px; color: #222; }
.scale { width: 48px; text-align: left; }
.vb { width: 18px; height: 15px; }
.vb svg { display: block; width: 18px; height: 15px; }
.viewbar .arrow { margin-left: 9px; }
.hthumb { width: 16px; height: 14px; margin-left: auto; background: #ccc; }

/* status bar */
.status { flex: none; display: flex; align-items: center; height: 20px; background: #cfcfcf; color: #222; white-space: nowrap; overflow: hidden; }
.status > * { flex: none; }
.hint { width: 316px; padding-left: 1px; }
.ws { width: 14px; height: 15px; margin-right: 4px; }
.combo.white { width: 188px; height: 18px; background: #fff; border: 0; }
.combo.white.dim { color: #999; margin-left: 6px; }
.combo.white.dim::after { border-color: #bbb; }
.req { width: 14px; height: 15px; margin: 0 4px 0 8px; }
.count { width: 31px; }
.opt { width: 15px; height: 15px; }
.opt + .opt { margin-left: 9px; }
.edit { display: flex; align-items: center; gap: 3px; margin-left: 117px; }
.edit input { appearance: none; width: 13px; height: 13px; border: 1px solid #444; background: #fff; }
```
